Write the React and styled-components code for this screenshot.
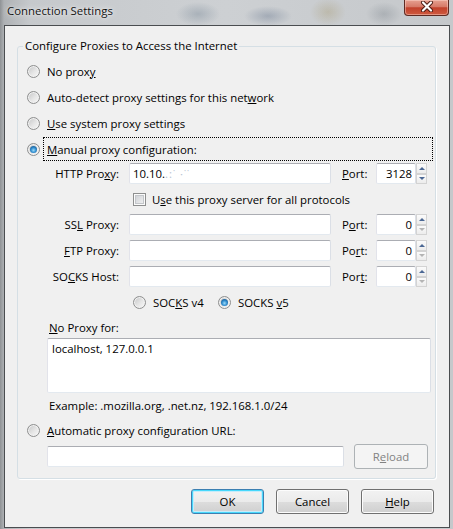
import React from 'react';
import styled, { createGlobalStyle, css } from 'styled-components';

const GlobalStyle = createGlobalStyle`
  html, body { margin: 0; padding: 0; background: #c4c7cb; }
  body {
    font-family: "Open Sans", "Noto Sans", "Liberation Sans", sans-serif;
    font-size: 11.4px;
    color: #000;
  }
  * { box-sizing: border-box; }
`;

const Window = styled.div`
  width: 453px;
  height: 529px;
  display: flex;
  flex-direction: column;
  overflow: hidden;
  background:
    radial-gradient(ellipse 22px 12px at 198px 14px, rgba(90, 110, 130, 0.3), transparent),
    radial-gradient(ellipse 24px 10px at 268px 16px, rgba(70, 90, 120, 0.3), transparent),
    radial-gradient(ellipse 18px 14px at 328px 12px, rgba(150, 130, 70, 0.25), transparent),
    radial-gradient(ellipse 18px 12px at 384px 14px, rgba(90, 100, 110, 0.25), transparent),
    linear-gradient(to right, #8f9295 0px, #aeb1b4 4px, #c6c9cc 30px, #cdd0d3 50%, #c5c8cb 100%);
`;

const TitleBar = styled.div`
  height: 25px;
  flex: none;
  display: flex;
  justify-content: space-between;
  align-items: flex-start;
`;

const Title = styled.div`
  padding: 3px 0 0 7px;
  line-height: 16px;
  color: #111;
  text-shadow: 0 0 6px rgba(255, 255, 255, 0.9), 0 0 2px rgba(255, 255, 255, 0.7);
`;

const CloseButton = styled.div`
  width: 45px;
  height: 16px;
  margin-right: 4px;
  border: 1px solid #5e2a22;
  border-top: none;
  border-radius: 0 0 4px 4px;
  background: linear-gradient(#e6a090 0%, #d67a68 45%, #c1412b 52%, #cf5a40 100%);
  box-shadow: inset 0 0 0 1px rgba(255, 220, 210, 0.45);
  display: flex;
  align-items: center;
  justify-content: center;
  padding-bottom: 3px;
`;

const ClientArea = styled.div`
  flex: 1;
  margin: 0 3px 1px 4px;
  border: 1px solid #4a4d50;
  background: #f0f0f0;
  padding: 0 13px 0 12px;
  display: flex;
  flex-direction: column;
`;

const GroupBox = styled.fieldset`
  margin: 12px 0 0;
  padding: 4px 0 9px;
  border: 1px solid #d5dfe5;
  border-radius: 3px;
  box-shadow: 1px 1px 0 #fff;
  min-width: 0;
`;

const Caption = styled.legend`
  margin-left: 5px;
  padding: 0 2px;
  line-height: 16px;
  height: 16px;
`;

const Key = styled.span`
  text-decoration: underline;
  text-underline-offset: 1px;
`;

const RadioRow = styled.div`
  display: flex;
  align-items: center;
  height: ${p => p.$h || 26}px;
  padding-left: 9px;
  gap: ${p => (p.$focus ? 3 : 7)}px;
`;

const Radio = styled.span`
  position: relative;
  flex: none;
  width: 13px;
  height: 13px;
  border-radius: 50%;
  border: 1px solid #8e8f8f;
  background: linear-gradient(135deg, #c4c5c6 0%, #e6e6e6 55%, #f8f8f8 100%);
  box-shadow: inset 0 0 0 1px #f2f2f2;
  ${p =>
    p.$checked &&
    css`
      &::after {
        content: '';
        position: absolute;
        left: 2px;
        top: 2px;
        width: 7px;
        height: 7px;
        border-radius: 50%;
        background: radial-gradient(circle at 50% 60%, #9fdcf8 0%, #2f8ccf 45%, #154a7a 95%);
      }
    `}
`;

const FocusLabel = styled.div`
  flex: 1;
  height: 24px;
  margin-right: 2px;
  border: 1px dotted #000;
  padding-left: 3px;
  display: flex;
  align-items: center;
`;

const ProxyGrid = styled.div`
  display: grid;
  grid-template-columns: 111px 213px 34px 51px;
  grid-template-rows: 21px 20px 21px 21px 21px;
  row-gap: 5px;
  margin-top: 1px;
`;

const FieldLabel = styled.div`
  display: flex;
  align-items: center;
  justify-content: ${p => (p.$left ? 'flex-start' : 'flex-end')};
  padding-right: ${p => (p.$left ? 0 : 10)}px;
  white-space: nowrap;
`;

const Field = styled.div`
  width: ${p => p.$w || 202}px;
  height: 21px;
  background: #fff;
  border: 1px solid;
  border-color: #abadb3 #dbdfe6 #e3e9ef #e2e3ea;
  border-radius: 2px;
  padding: 0 3px;
  display: flex;
  align-items: center;
  white-space: nowrap;
  overflow: hidden;
  ${p => p.$right && css`justify-content: flex-end;`}
`;

const Obscured = styled.span`
  color: #b7c3d3;
  letter-spacing: 1px;
`;

const SpinBox = styled.div`
  display: flex;
  height: 21px;
`;

const SpinColumn = styled.div`
  width: 11px;
  display: flex;
  flex-direction: column;
`;

const SpinButton = styled.div`
  flex: 1;
  border: 1px solid #d3d3d3;
  background: linear-gradient(#fbfbfb, #ececec);
  display: flex;
  align-items: center;
  justify-content: center;
  &::before {
    content: '';
    width: 0;
    height: 0;
    border-left: 3px solid transparent;
    border-right: 3px solid transparent;
    ${p =>
      p.$down
        ? css`border-top: 3px solid ${p.$disabled ? '#b4b4b4' : '#4c6894'};`
        : css`border-bottom: 3px solid ${p.$disabled ? '#b4b4b4' : '#4c6894'};`}
  }
`;

const CheckRow = styled.div`
  grid-column: 2 / 5;
  display: flex;
  align-items: center;
  gap: 6px;
  padding-left: 4px;
  white-space: nowrap;
`;

const Checkbox = styled.span`
  flex: none;
  width: 13px;
  height: 13px;
  border: 1px solid #8e8f8f;
  background: linear-gradient(135deg, #c9ccd1 0%, #e4e5e7 60%, #f6f6f6 100%);
  box-shadow: inset 0 0 0 1px #fbfbfb, inset 0 0 0 2px #c3c6ca;
`;

const SocksRow = styled.div`
  height: 31px;
  display: grid;
  grid-template-columns: 85px auto;
  align-items: center;
  padding-left: 115px;
`;

const Option = styled.div`
  display: flex;
  align-items: center;
  gap: 7px;
  white-space: nowrap;
`;

const PlainLabel = styled.div`
  height: ${p => p.$h}px;
  padding-left: 31px;
  display: flex;
  align-items: center;
`;

const TextArea = styled.div`
  height: 55px;
  margin: 2px 4px 0 29px;
  background: #fff;
  border: 1px solid;
  border-color: #abadb3 #dbdfe6 #e3e9ef #e2e3ea;
  border-radius: 2px;
  padding: 2px 4px;
  line-height: 16px;
`;

const UrlRow = styled.div`
  height: 25px;
  margin-top: 2px;
  padding: 0 7px 0 29px;
  display: flex;
  align-items: center;
  gap: 10px;
`;

const Button = styled.div`
  width: ${p => p.$w || 73}px;
  height: 25px;
  flex: none;
  border: 1px solid #707070;
  border-radius: 3px;
  background: linear-gradient(#f2f2f2 0%, #ebebeb 50%, #dddddd 50%, #cfcfcf 100%);
  box-shadow: inset 0 0 0 1px #fcfcfc;
  display: flex;
  align-items: center;
  justify-content: center;
  ${p =>
    p.$default &&
    css`
      border-color: #3c7fb1;
      box-shadow: inset 0 0 0 1px #48d8fb, inset 0 0 0 2px #c4ecfb;
    `}
  ${p =>
    p.$disabled &&
    css`
      border-color: #adb2b5;
      background: #f4f4f4;
      color: #838383;
      box-shadow: none;
    `}
`;

const ButtonBar = styled.div`
  display: flex;
  justify-content: flex-end;
  gap: 12px;
  margin-top: 10px;
  padding-right: 2px;
`;

const Spinner = ({ value, canDown }) => (
  <SpinBox>
    <Field $w={40} $right>
      {value}
    </Field>
    <SpinColumn>
      <SpinButton />
      <SpinButton $down $disabled={!canDown} />
    </SpinColumn>
  </SpinBox>
);

const CloseGlyph = () => (
  <svg width="14" height="11" viewBox="0 0 14 11">
    <path d="M3 1.5 L11 9.5 M11 1.5 L3 9.5" stroke="#4a1a12" strokeWidth="4" strokeLinecap="round" />
    <path d="M3 1.5 L11 9.5 M11 1.5 L3 9.5" stroke="#fff" strokeWidth="2.2" strokeLinecap="round" />
  </svg>
);

export default function App() {
  return (
    <>
      <GlobalStyle />
      <Window>
        <TitleBar>
          <Title>Connection Settings</Title>
          <CloseButton>
            <CloseGlyph />
          </CloseButton>
        </TitleBar>
        <ClientArea>
          <GroupBox>
            <Caption>Configure Proxies to Access the Internet</Caption>
            <RadioRow>
              <Radio />
              <span>
                No prox<Key>y</Key>
              </span>
            </RadioRow>
            <RadioRow>
              <Radio />
              <span>
                Auto-detect proxy settings for this net<Key>w</Key>ork
              </span>
            </RadioRow>
            <RadioRow>
              <Radio />
              <span>
                <Key>U</Key>se system proxy settings
              </span>
            </RadioRow>
            <RadioRow $focus>
              <Radio $checked />
              <FocusLabel>
                <span>
                  <Key>M</Key>anual proxy configuration:
                </span>
              </FocusLabel>
            </RadioRow>
            <ProxyGrid>
              <FieldLabel>
                <span>
                  HTTP Pro<Key>x</Key>y:
                </span>
              </FieldLabel>
              <Field>
                10.10.<Obscured>.:˙ ·˙˙</Obscured>
              </Field>
              <FieldLabel $left>
                <span>
                  <Key>P</Key>ort:
                </span>
              </FieldLabel>
              <Spinner value="3128" canDown />

              <FieldLabel />
              <CheckRow>
                <Checkbox />
                <span>
                  U<Key>s</Key>e this proxy server for all protocols
                </span>
              </CheckRow>

              <FieldLabel>
                <span>
                  SS<Key>L</Key> Proxy:
                </span>
              </FieldLabel>
              <Field />
              <FieldLabel $left>
                <span>
                  P<Key>o</Key>rt:
                </span>
              </FieldLabel>
              <Spinner value="0" />

              <FieldLabel>
                <span>
                  <Key>F</Key>TP Proxy:
                </span>
              </FieldLabel>
              <Field />
              <FieldLabel $left>
                <span>
                  Po<Key>r</Key>t:
                </span>
              </FieldLabel>
              <Spinner value="0" />

              <FieldLabel>
                <span>
                  SO<Key>C</Key>KS Host:
                </span>
              </FieldLabel>
              <Field />
              <FieldLabel $left>
                <span>
                  Por<Key>t</Key>:
                </span>
              </FieldLabel>
              <Spinner value="0" />
            </ProxyGrid>
            <SocksRow>
              <Option>
                <Radio />
                <span>
                  SOC<Key>K</Key>S v4
                </span>
              </Option>
              <Option>
                <Radio $checked />
                <span>
                  SOCKS <Key>v</Key>5
                </span>
              </Option>
            </SocksRow>
            <PlainLabel $h={18}>
              <span>
                <Key>N</Key>o Proxy for:
              </span>
            </PlainLabel>
            <TextArea>localhost, 127.0.0.1</TextArea>
            <PlainLabel $h={25}>Example: .mozilla.org, .net.nz, 192.168.1.0/24</PlainLabel>
            <RadioRow $h={24}>
              <Radio />
              <span>
                <Key>A</Key>utomatic proxy configuration URL:
              </span>
            </RadioRow>
            <UrlRow>
              <Field $w={297} />
              <Button $w={74} $disabled>
                <span>
                  R<Key>e</Key>load
                </span>
              </Button>
            </UrlRow>
          </GroupBox>
          <ButtonBar>
            <Button $default>OK</Button>
            <Button>Cancel</Button>
            <Button>
              <span>
                <Key>H</Key>elp
              </span>
            </Button>
          </ButtonBar>
        </ClientArea>
      </Window>
    </>
  );
}
